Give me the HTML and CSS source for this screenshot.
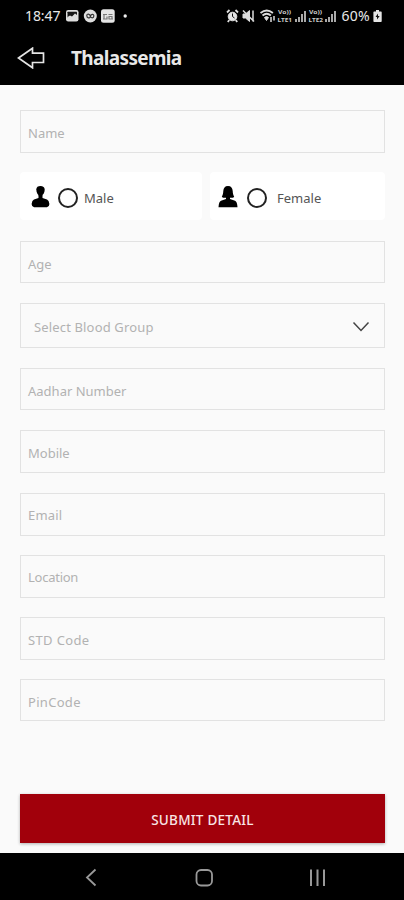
FILE: index.html
```html
<!DOCTYPE html>
<html lang="en">
<head>
<meta charset="utf-8">
<title>Thalassemia</title>
<link rel="stylesheet" href="styles.css">
</head>
<body>
<header class="header">
  <div class="status">
    <span class="clock">18:47</span>
    <svg class="notices" width="64" height="16" viewBox="0 0 64 16">
      <rect x="1" y="2" width="12.500" height="11.5" rx="2.2" fill="#ddd"/>
      <rect x="2.500" y="3.700" width="9.500" height="6" rx="0.6" fill="#161616"/>
      <path d="M2.500 10.500V9l2.500-1.500 2 1L10 5.500 12 7v3.500z" fill="#ddd"/>
      <circle cx="25.300" cy="8" r="6.500" fill="#ddd"/>
      <path d="M21.800 7.500c0-2 3-2 3.500.500s3.500 2.500 3.500 0-3-2-3.500.500-3.500 1.500-3.500-1z" fill="none" stroke="#333" stroke-width="1.200"/>
      <rect x="36" y="1.200" width="13.700" height="13.500" rx="2.500" fill="#e4e4e4"/>
      <path d="M38 6.500h4M39 6.500v4.500M38 11h4v-2.500M43.500 6.500h4M44 11V8.500h3V11M43.500 11h4.500" fill="none" stroke="#777" stroke-width="1.200"/>
      <circle cx="60.200" cy="8" r="1.700" fill="#eee"/>
    </svg>
    <svg class="signals" width="112" height="16" viewBox="0 0 112 16">
      <g fill="none" stroke="#ddd">
        <circle cx="6.500" cy="8.500" r="4.300" fill="#e5e5e5"/>
        <path d="M1 4.500 3.500 2M9.500 2 12 4.500M3.300 12 1.800 14M9.700 12l1.500 2" stroke-width="1.800"/>
        <path d="M6.500 5.500v3l2 1.500" stroke="#111"/>
        <path d="M17 6h2.500l4-3.500v11L19.500 10H17z" fill="#ddd"/>
        <path d="M17 2.500 28 13.500M27 2.500v11" stroke-width="1.500"/>
        <path d="M34.500 5q6.200-5 12.400 0M36.500 7.500q4.200-3.500 8.400 0" stroke-width="1.800"/>
        <path d="M38.500 9.500q2-1.800 4 0l-2 3z" fill="#ddd"/>
        <path d="M45 9v5M48 8v4.500" stroke-width="1.500"/>
      </g>
      <g class="carrier">
        <text x="52" y="6.300" textLength="13" lengthAdjust="spacingAndGlyphs">Vo))</text><text x="51.500" y="14.300" textLength="14.500" lengthAdjust="spacingAndGlyphs">LTE1</text>
        <text x="83" y="6.300" textLength="13" lengthAdjust="spacingAndGlyphs">Vo))</text><text x="82.500" y="14.300" textLength="14.500" lengthAdjust="spacingAndGlyphs">LTE2</text>
      </g>
      <g fill="#aaa">
        <path d="M69 11h2v3H69zM72 9h2v5H72zM75 6h2v8H75zM78 3h2v11H78zM99 11h2v3H99zM102 9h2v5H102zM105 6h2v8H105zM108 3h2v11H108z"/>
      </g>
    </svg>
    <span class="percent">60%</span>
    <svg class="battery" width="9" height="14" viewBox="0 0 9 14">
      <path d="M3 1h3v1.500h2q.7 0 .7.700v9q0 .8-.8.800H1.200q-.8 0-.8-.800v-9q0-.7.700-.7H3z" fill="#e5e5e5"/>
      <path d="M5 4.500 2.500 8H4v2.500L6.700 7H5z" fill="#111"/>
    </svg>
  </div>
  <div class="titlebar">
    <svg class="back" width="28" height="22" viewBox="0 0 28 22">
      <path d="M1.500 11 15.500 1.200V6.200H26.500V15.500H15.500V20.800Z" fill="none" stroke="#e4e4e4" stroke-width="1.700"/>
    </svg>
    <h1 class="title">Thalassemia</h1>
  </div>
</header>
<main class="form">
  <div class="field tall"><span class="name">Name</span></div>
  <div class="genders">
    <div class="gender male">
      <svg width="19" height="23" viewBox="0 0 19 23">
        <path d="M5.300 4.500C5.300 2 7 1 9.500 1s4.200 1.200 4.200 3.800c0 2.700-1.500 5.700-4.200 6.700-2.700-1-4.200-4-4.200-7z"/>
        <path d="M7.500 10h4v3l4.500 1.500q2 .8 2.400 4.500 0 2.800-2.500 3.200H3.100Q.6 21.800.6 19 1 15.300 3 14.500L7.500 13z"/>
      </svg>
      <span class="radio"></span><span class="male-text">Male</span>
    </div>
    <div class="gender female">
      <svg width="20" height="23" viewBox="0 0 20 23">
        <path d="M10 1C6.800 1 5.500 3 5.300 6 5.200 8.500 4.700 10 3.800 11.900q2 1.300 4.200.8V14l-5 1.700Q.8 16.500.5 22.300h19Q19.200 16.500 17 15.700L12 14v-1.300q2.200.5 4.200-.8C15.300 10 14.800 8.500 14.700 6 14.500 3 13.200 1 10 1z"/>
      </svg>
      <span class="radio"></span><span class="female-text">Female</span>
    </div>
  </div>
  <div class="field"><span class="age">Age</span></div>
  <div class="field select"><span class="blood">Select Blood Group</span>
    <svg width="18" height="12" viewBox="0 0 18 12"><path d="M1.500 1.500 9 9.500 16.500 1.500" fill="none" stroke="#444" stroke-width="1.500"/></svg>
  </div>
  <div class="field"><span class="aadhar">Aadhar Number</span></div>
  <div class="field tall"><span class="mobile">Mobile</span></div>
  <div class="field tall"><span class="email">Email</span></div>
  <div class="field tall"><span class="location">Location</span></div>
  <div class="field tall"><span class="std">STD Code</span></div>
  <div class="field"><span class="pin">PinCode</span></div>
  <button class="submit"><span>SUBMIT DETAIL</span></button>
</main>
<nav class="nav">
  <svg width="404" height="47" viewBox="0 0 404 47" fill="none" stroke="#999" stroke-width="1.800">
    <path d="M95.500 16.500 87 24.500l8.500 8"/>
    <rect x="196.500" y="17" width="15.500" height="15.500" rx="4.500"/>
    <path d="M311 16.500v16.500M317.500 16.500v16.500M324 16.500v16.500" stroke-width="2"/>
  </svg>
</nav>
</body>
</html>
```
FILE: styles.css
```css
* { box-sizing: border-box; }
body {
  margin: 0;
  width: 404px;
  height: 900px;
  display: flex;
  flex-direction: column;
  overflow: hidden;
  background: #fafafa;
  font-family: "Noto Sans", sans-serif;
}
svg { display: block; flex: none; }
span { white-space: nowrap; }
.header { height: 85px; background: #000; color: #e8e8e8; }
.status {
  height: 32px;
  display: flex;
  align-items: center;
  padding-left: 25px;
  font-size: 14px;
  line-height: 20px;
}
.clock { width: 40px; letter-spacing: -0.1px; }
.signals { margin-left: 97px; }
.carrier { fill: #ccc; font-size: 5.500px; font-weight: 700; }
.percent { width: 31px; margin-left: 3.500px; letter-spacing: 0.3px; }
.titlebar { height: 52px; display: flex; align-items: center; padding-left: 17px; }
.title {
  margin: 0 0 0 26px;
  font-size: 19px;
  line-height: 26px;
  font-weight: 700;
  letter-spacing: -0.65px;
}
.form { flex: 1; padding: 25px 19px 0 20px; }
.field {
  height: 42px;
  margin-bottom: 20px;
  padding: 3px 15px 0 7px;
  border: 1px solid #e2e2e2;
  display: flex;
  align-items: center;
  font-size: 13px;
  line-height: 18px;
  color: #b2b2b2;
}
.field.tall { height: 43px; margin-bottom: 19.250px; }
.field.select {
  height: 45px;
  padding: 3px 14px 0 13px;
  justify-content: space-between;
}
.field .email, .field .location { margin-top: -2px; }
.blood { letter-spacing: 0.15px; }
.location { letter-spacing: -0.25px; }
.std { letter-spacing: 0.350px; }
.pin { letter-spacing: 0.3px; }
.email { letter-spacing: 0.2px; }
.genders { height: 48px; display: flex; gap: 8px; margin-bottom: 21px; }
.gender {
  display: flex;
  align-items: center;
  padding: 4px 0 0 11px;
  background: #fff;
  border-radius: 4px;
  font-size: 13px;
  color: #555;
}
.gender svg { margin-top: -4px; }
.male { width: 182px; }
.female { width: 176px; padding-left: 8px; }
.radio {
  width: 20px;
  height: 20px;
  margin: -1px 6px 0 8px;
  border: 2px solid #222;
  border-radius: 50%;
}
.female .radio { margin-left: 9px; margin-right: 10.500px; }
.submit {
  display: flex;
  align-items: center;
  justify-content: center;
  width: 365px;
  height: 49px;
  margin-top: 73.200px;
  padding: 2px 0 0;
  border: 0;
  background: #a1000b;
  box-shadow: 0 1px 3px rgba(0, 0, 0, 0.3);
  color: #f8e4e5;
  font: 500 13.500px "Noto Sans", sans-serif;
  letter-spacing: 0.250px;
}
.nav { height: 47px; background: #000; }
```
